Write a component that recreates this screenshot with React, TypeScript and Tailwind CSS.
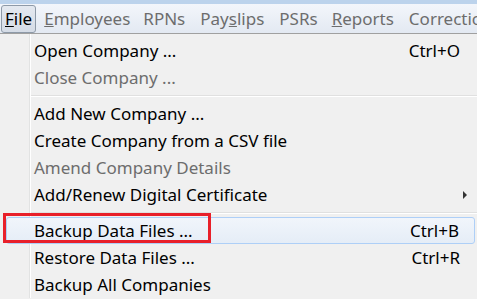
const font = { fontFamily: '"Segoe UI", "Noto Sans", "Open Sans", sans-serif' };

type Item = { label: string; shortcut?: string; disabled?: boolean; submenu?: boolean; active?: boolean } | 'sep';

const items: Item[] = [
  { label: 'Open Company ...', shortcut: 'Ctrl+O' },
  { label: 'Close Company ...', disabled: true },
  'sep',
  { label: 'Add New Company ...' },
  { label: 'Create Company from a CSV file' },
  { label: 'Amend Company Details', disabled: true },
  { label: 'Add/Renew Digital Certificate', submenu: true },
  'sep',
  { label: 'Backup Data Files ...', shortcut: 'Ctrl+B', active: true },
  { label: 'Restore Data Files ...', shortcut: 'Ctrl+R' },
  { label: 'Backup All Companies' },
];

const MenuBar = () => (
  <div className="h-[30px] flex items-center bg-gradient-to-b from-[#f3f6fb] to-[#e3e9f2] border-b border-[#a0a0a0] text-[17px] text-[#6d6d6d] whitespace-nowrap overflow-hidden">
    <div className="ml-[1px] h-[28px] px-[3px] flex items-center rounded-[3px] border border-[#8e9aa8] bg-gradient-to-b from-[#e4e9f0] to-[#d5dce6] text-black">
      <span><u>F</u>ile</span>
    </div>
    <span className="ml-[8px]"><u>E</u>mployees</span>
    <span className="ml-[13px]">RPNs</span>
    <span className="ml-[15px]">Pay<u>s</u>lips</span>
    <span className="ml-[15px]">PSRs</span>
    <span className="ml-[14px]"><u>R</u>eports</span>
    <span className="ml-[15px]">Correctio</span>
  </div>
);

export default function App() {
  return (
    <div className="w-[477px] h-[299px] overflow-hidden bg-[#f0f0f0]" style={font}>
      <div className="h-[4px] bg-[#bcd3ec]" />
      <MenuBar />
      <div className="relative pt-[3px] text-[17px]">
        {/* gutter line */}
        <div className="absolute left-[29px] top-0 bottom-0 w-[2px] border-l border-[#e2e3e3] border-r border-r-white" />
        {items.map((it, i) =>
          it === 'sep' ? (
            <div key={i} className="h-[9px] flex items-center pl-[30px]">
              <div className="w-full h-[2px] border-t border-[#e0e0e0] border-b border-b-white" />
            </div>
          ) : (
            <div
              key={i}
              className={
                'relative h-[27px] flex items-center mr-[2px] pr-[15px] ' +
                (it.active
                  ? 'ml-[6px] pl-[27px] border border-[#aecff7] rounded-[3px] bg-gradient-to-b from-[#f1f5fb] to-[#e5edf7]'
                  : 'ml-[2px] pl-[32px]') +
                (it.disabled ? ' text-[#6d6d6d]' : ' text-black')
              }
            >
              <span className="flex-1 whitespace-nowrap">{it.label}</span>
              {it.shortcut && <span className="whitespace-nowrap">{it.shortcut}</span>}
              {it.submenu && (
                <svg width="5" height="8" viewBox="0 0 5 8" className="mr-[-8px]">
                  <path d="M0 0 L4 4 L0 8 Z" fill="#333" />
                </svg>
              )}
            </div>
          )
        )}
        <div className="absolute left-[3px] top-[179px] w-[208px] h-[30px] border-[3px] border-[#e8202a]" />
      </div>
    </div>
  );
}
